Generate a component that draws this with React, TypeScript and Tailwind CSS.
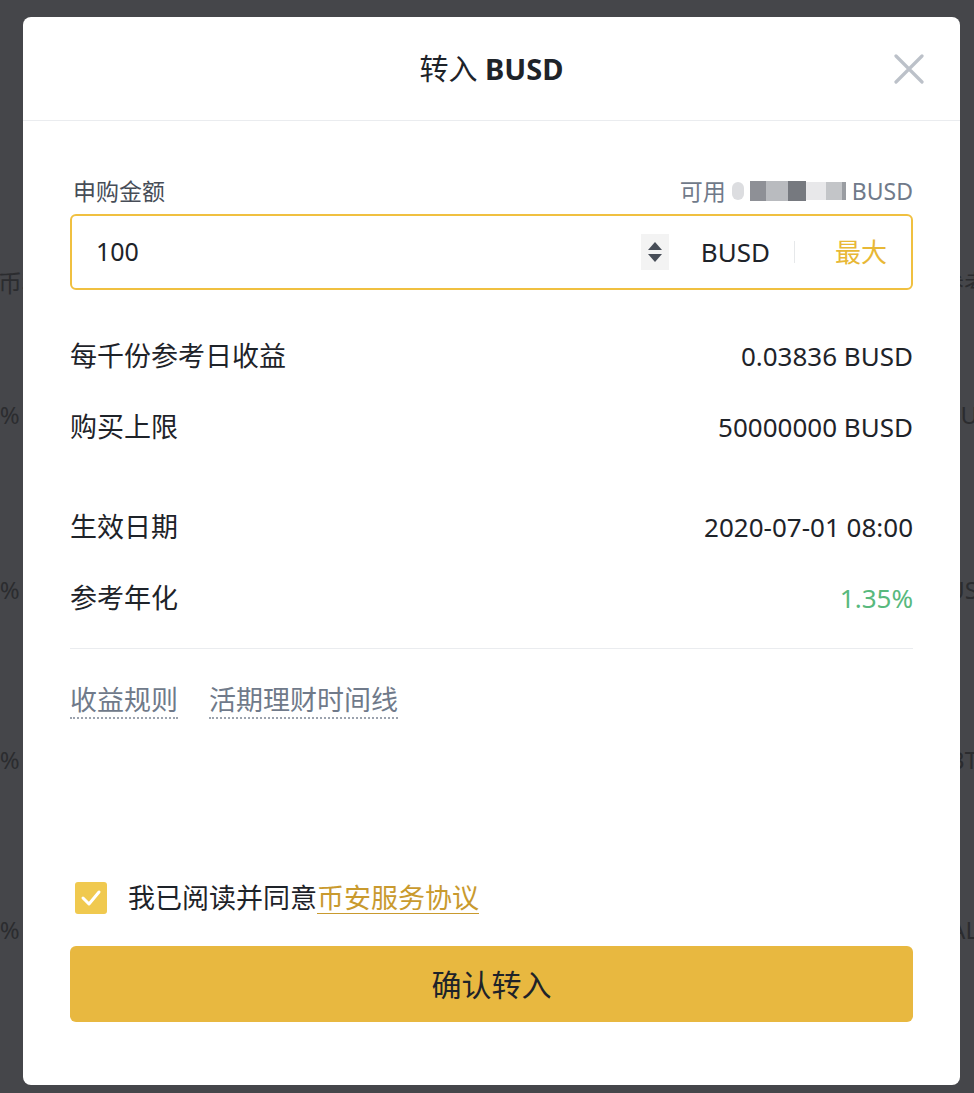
import React from "react";

const font = { fontFamily: '"Noto Sans", "Noto Sans CJK SC", sans-serif' };

function Row({ label, value, valueClass = "text-[#1e2329]", mt }: { label: string; value: string; valueClass?: string; mt: string }) {
  return (
    <div className={`flex h-[40px] items-center justify-between ${mt}`}>
      <span className="text-[27px] text-[#1e2329]">{label}</span>
      <span className={`text-[26px] ${valueClass}`}>{value}</span>
    </div>
  );
}

export default function App() {
  return (
    <div className="relative h-[1093px] w-[974px] overflow-hidden bg-[#45464a]" style={font}>
      {/* dimmed page behind */}
      <div className="flex flex-col text-[24px] text-[#2b2c2f]">
        <div className="mt-[266px] flex h-[34px] items-center justify-between">
          <span className="-ml-[2px]">币种</span>
          <span className="-mr-[14px]">参考</span>
        </div>
        <div className="mt-[98px] flex h-[34px] items-center justify-between">
          <span className="-ml-[14px]">0%</span>
          <span className="-mr-[4px]">BU</span>
        </div>
        <div className="mt-[141px] flex h-[34px] items-center justify-between">
          <span className="-ml-[14px]">0%</span>
          <span className="-mr-[4px]">US</span>
        </div>
        <div className="mt-[136px] flex h-[34px] items-center justify-between">
          <span className="-ml-[14px]">0%</span>
          <span className="-mr-[4px]">BT</span>
        </div>
        <div className="mt-[136px] flex h-[34px] items-center justify-between">
          <span className="-ml-[14px]">0%</span>
          <span className="-mr-[4px]">AL</span>
        </div>
      </div>

      {/* modal */}
      <div className="absolute left-[23px] top-[17px] flex h-[1068px] w-[937px] flex-col rounded-[8px] bg-white">
        <div className="relative flex h-[104px] items-center justify-center border-b border-[#eaecef]">
          <span className="text-[29px] text-[#1e2329]">
            转入 <span className="font-bold">BUSD</span>
          </span>
          <svg className="absolute right-[36px] top-[37px]" width="30" height="30" viewBox="0 0 30 30">
            <path d="M2 2 L28 28 M28 2 L2 28" stroke="#bcc1c9" strokeWidth="3.2" strokeLinecap="round" />
          </svg>
        </div>

        <div className="flex flex-1 flex-col px-[47px] pt-[55px]">
          <div className="flex h-[30px] items-center justify-between">
            <span className="ml-[3px] text-[23px] text-[#474d57]">申购金额</span>
            <span className="flex items-center text-[23px] text-[#707a8a]">
              可用
              <span className="mx-[6px] flex h-[22px] items-center gap-0 blur-[0.6px]">
                <span className="h-[18px] w-[12px] rounded-full bg-[#dcdde0]" />
                <span className="ml-[6px] h-[20px] w-[16px] bg-[#8e9096]" />
                <span className="h-[20px] w-[22px] bg-[#b9bbbf]" />
                <span className="h-[20px] w-[18px] bg-[#76797f]" />
                <span className="h-[18px] w-[20px] bg-[#e8e8ea]" />
                <span className="h-[18px] w-[16px] bg-[#c3c5c8]" />
                <span className="h-[18px] w-[4px] bg-[#9a9da2]" />
              </span>
              BUSD
            </span>
          </div>

          <div className="mt-[8px] flex h-[76px] items-center rounded-[6px] border-2 border-[#f0c040] pl-[24px] pr-[24px]">
            <span className="flex-1 text-[25px] text-[#1e2329]">100</span>
            <span className="flex h-[36px] w-[28px] flex-col items-center justify-center gap-[4px] bg-[#f3f3f3]">
              <svg width="14" height="8" viewBox="0 0 14 8"><path d="M7 0 L14 8 L0 8 Z" fill="#474d57" /></svg>
              <svg width="14" height="8" viewBox="0 0 14 8"><path d="M0 0 L14 0 L7 8 Z" fill="#474d57" /></svg>
            </span>
            <span className="ml-[32px] text-[26px] text-[#1e2329]">BUSD</span>
            <span className="ml-[24px] h-[22px] w-px bg-[#e6e8ea]" />
            <span className="ml-[40px] text-[26px] text-[#e8b836]">最大</span>
          </div>

          <Row mt="mt-[46px]" label="每千份参考日收益" value="0.03836 BUSD" />
          <Row mt="mt-[31px]" label="购买上限" value="50000000 BUSD" />
          <Row mt="mt-[60px]" label="生效日期" value="2020-07-01 08:00" />
          <Row mt="mt-[31px]" label="参考年化" value="1.35%" valueClass="text-[#58b97d]" />

          <div className="mt-[30px] h-px bg-[#eaecef]" />

          <div className="mt-[34px] flex h-[36px] items-center gap-[31px] text-[27px] text-[#707a8a]">
            <span className="border-b-2 border-dotted border-[#9ca3ae] leading-[34px]">收益规则</span>
            <span className="border-b-2 border-dotted border-[#9ca3ae] leading-[34px]">活期理财时间线</span>
          </div>

          <div className="mt-[163px] flex h-[32px] items-center">
            <span className="ml-[5px] flex h-[32px] w-[32px] items-center justify-center rounded-[3px] bg-[#f0c94f]">
              <svg width="22" height="18" viewBox="0 0 22 18">
                <path d="M3 9 L9 15 L19 3" stroke="white" strokeWidth="3" fill="none" strokeLinecap="round" strokeLinejoin="round" />
              </svg>
            </span>
            <span className="ml-[21px] text-[27px] text-[#1e2329]">
              我已阅读并同意
              <span className="text-[#c99a2e] underline decoration-1 underline-offset-[5px]">币安服务协议</span>
            </span>
          </div>

          <div className="mt-[32px] flex h-[76px] items-center justify-center rounded-[6px] bg-[#e8b840]">
            <span className="text-[30px] text-[#1e2329]">确认转入</span>
          </div>
        </div>
      </div>
    </div>
  );
}
